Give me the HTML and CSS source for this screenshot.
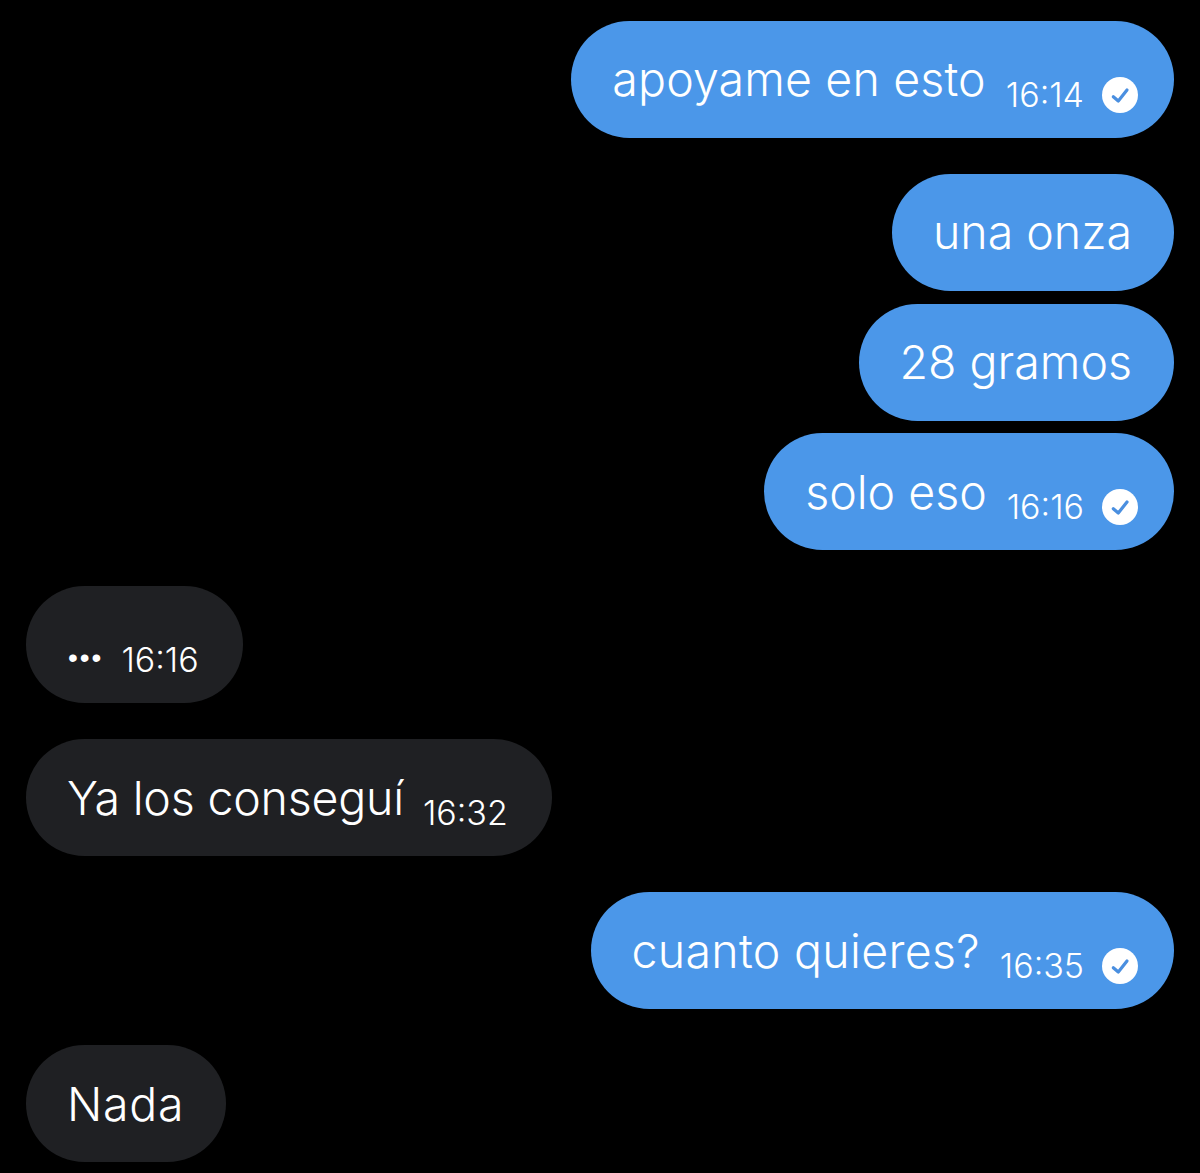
FILE: index.html
```html
<!DOCTYPE html>
<html lang="es">
<head>
<meta charset="utf-8">
<title>Chat</title>
<link rel="stylesheet" href="styles.css">
</head>
<body>
<main class="chat">
  <div class="group">
    <div class="msg out"><span class="text open">apoyame en esto</span><span class="time">16:14</span><svg class="check" viewBox="0 0 36 36"><circle cx="18" cy="18" r="18" fill="#fff"/><path d="M11.3 19.7l5 4.3 8.7-11" fill="none" stroke="#4a8fe0" stroke-width="3.2" stroke-linecap="round" stroke-linejoin="round"/></svg></div>
  </div>
  <div class="group">
    <div class="msg out"><span class="text">una onza</span></div>
    <div class="msg out"><span class="text">28 gramos</span></div>
    <div class="msg out"><span class="text">solo eso</span><span class="time">16:16</span><svg class="check" viewBox="0 0 36 36"><circle cx="18" cy="18" r="18" fill="#fff"/><path d="M11.3 19.7l5 4.3 8.7-11" fill="none" stroke="#4a8fe0" stroke-width="3.2" stroke-linecap="round" stroke-linejoin="round"/></svg></div>
  </div>
  <div class="group">
    <div class="msg in"><span class="dots">•••</span><span class="time">16:16</span></div>
  </div>
  <div class="group">
    <div class="msg in"><span class="text tight">Ya los conseguí</span><span class="time">16:32</span></div>
  </div>
  <div class="group">
    <div class="msg out"><span class="text loose">cuanto quieres?</span><span class="time">16:35</span><svg class="check" viewBox="0 0 36 36"><circle cx="18" cy="18" r="18" fill="#fff"/><path d="M11.3 19.7l5 4.3 8.7-11" fill="none" stroke="#4a8fe0" stroke-width="3.2" stroke-linecap="round" stroke-linejoin="round"/></svg></div>
  </div>
  <div class="group">
    <div class="msg in"><span class="text wider">Nada</span></div>
  </div>
</main>
</body>
</html>
```
FILE: styles.css
```css
* { box-sizing: border-box; }
html, body { margin: 0; height: 100%; background: #000; overflow: hidden; }
body { font-family: Inter, "Liberation Sans", sans-serif; color: #fff; }
.chat { display: flex; flex-direction: column; gap: 36.2px; padding: 21.3px 26px 0; }
.group { display: flex; flex-direction: column; gap: 12.8px; }
.msg { height: 116.8px; border-radius: 58.4px; padding: 0 42px 0 41px; display: flex; align-items: center; width: fit-content; }
.out { background: #4b97e9; align-self: flex-end; }
.out:has(.check) { padding-right: 36px; }
.in { background: #1f2023; align-self: flex-start; }
.in:has(.time) { padding-right: 44px; }
.text { font-size: 46.5px; font-weight: 350; line-height: 1; margin-top: 0; }
.open { letter-spacing: 0.15px; }
.tight { letter-spacing: -0.2px; }
.loose { letter-spacing: 0.3px; }
.wider { letter-spacing: 0.7px; }
.dots { font-family: "Liberation Sans", sans-serif; font-size: 28px; letter-spacing: 2px; line-height: 1; margin: 26px -1px 0 1px; }
.time { font-size: 34px; font-weight: 350; margin-left: 20px; margin-top: 29px; }
.in .time { margin-left: 19px; }
.check { width: 36px; height: 36px; margin-left: 18px; margin-top: 30px; }
```
